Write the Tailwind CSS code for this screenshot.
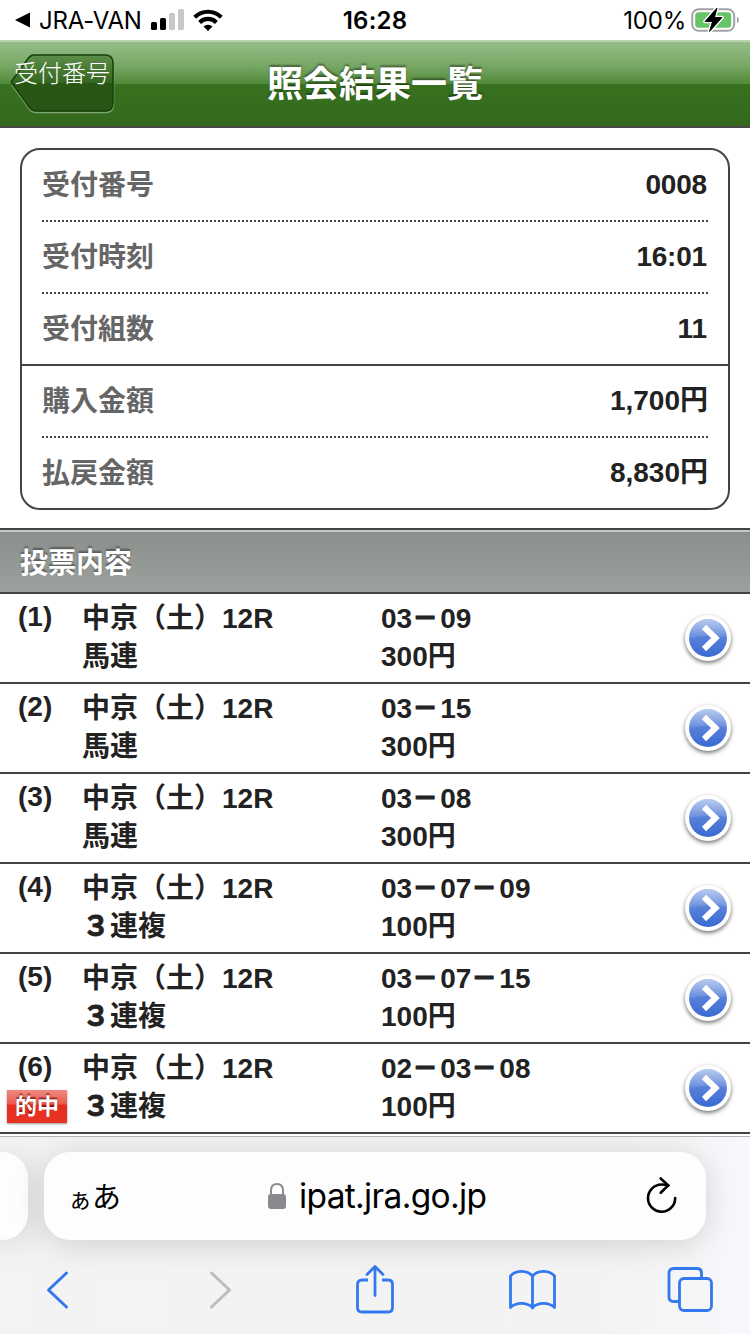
<!DOCTYPE html>
<html lang="ja">
<head>
    <meta charset="UTF-8">
    <meta name="viewport" content="width=device-width, initial-scale=1.0">
    <title>照会結果一覧</title>
    <script src="https://cdn.jsdelivr.net/npm/@tailwindcss/browser@4"></script>
</head>
<body class="bg-white w-[750px] h-[1334px] overflow-hidden flex flex-col text-[#222] font-['Liberation_Sans','Noto_Sans_CJK_JP',sans-serif]">

    <!-- status bar -->
    <div class="h-10 shrink-0 grid grid-cols-3 items-center text-black text-[24px] leading-10 font-['Inter',sans-serif]">
        <div class="flex items-center pl-[15px]">
            <svg class="w-[15px] h-4" viewBox="0 0 15 16"><path d="M0 8 15 .5v15z"/></svg>
            <span class="ml-[9px] w-[103px] pt-0.5 leading-[38px] whitespace-nowrap tracking-[-0.25px]">JRA-VAN</span>
            <svg class="ml-[9px] w-[33px] h-[22px]" viewBox="0 0 33 22">
                <rect x="0" y="13" width="6" height="8" rx="1.5"/>
                <rect x="9" y="9" width="6" height="12" rx="1.5"/>
                <rect x="18" y="4" width="6" height="17" rx="1.5" fill="#c8c8c8"/>
                <rect x="27" y="0" width="6" height="21" rx="1.5" fill="#c8c8c8"/>
            </svg>
            <svg class="ml-[9px] w-[30px] h-[22px]" viewBox="0 0 30 22">
                <g fill="none" stroke="#000" stroke-width="4.2">
                    <path d="M1.7 8.2a19 19 0 0 1 26.6 0"/>
                    <path d="M6.600 13.400a12 12 0 0 1 16.800 0"/>
                </g>
                <path d="M15 22l-4.500-4.500a6.500 6.500 0 0 1 9 0z"/>
            </svg>
        </div>
        <div class="pt-0.5 leading-[38px] text-center font-semibold tracking-[0.2px]">16:28</div>
        <div class="flex items-center justify-end pr-[11px]">
            <span class="pt-0.5 leading-[38px] tracking-[-0.2px]">100%</span>
            <svg class="ml-[5px] w-[48px] h-[26px]" viewBox="0 0 48 26">
                <rect x="1.200" y="2.200" width="42" height="21.600" rx="6.500" fill="none" stroke="#a3a3a5" stroke-width="2"/>
                <rect x="4.200" y="5.200" width="36" height="15.600" rx="3.500" fill="#65c466"/>
                <path d="M46 9.500q2 1 2 3.500t-2 3.500z" fill="#a3a3a5"/>
                <path d="M26 1 14 14.500h7.500L18.500 24.500l12.500-14h-7.500z" fill="#000" stroke="#fff" stroke-width="3.600" stroke-linejoin="round" paint-order="stroke"/>
                <path d="M26 1 14 14.500h7.500L18.500 24.500l12.500-14h-7.500z" stroke="#000" stroke-width=".8" stroke-linejoin="round"/>
            </svg>
        </div>
    </div>

    <!-- title bar -->
    <header class="relative h-[88px] shrink-0 border-t-2 border-t-[#b9d5ab] border-b-2 border-b-[#48484a] bg-[linear-gradient(#98bd89,#75a661_25px,#51883a_42px,#37721f_42px,#33681e)] flex justify-center">
        <h1 class="pt-1 text-white font-bold text-[36px] leading-[78px] [text-shadow:0_-2px_2px_rgba(0,0,0,.4)]">照会結果一覧</h1>
        <a class="absolute left-[10px] top-[11px] w-[106px] h-[62px]">
            <svg class="w-full h-full" viewBox="0 0 106 62">
                <defs>
                    <linearGradient id="back" x1="0" y1="0" x2="0" y2="1">
                        <stop offset="0" stop-color="#5d8e4a"/>
                        <stop offset=".5" stop-color="#34661f"/>
                        <stop offset=".5" stop-color="#285713"/>
                        <stop offset="1" stop-color="#285514"/>
                    </linearGradient>
                </defs>
                <path d="M24 3.500h71.500q8 0 8 8v40q0 8-8 8H26q-4 0-7-4L3 33.500q-2-2 0-4L17 8.500q3-5 7-5z" fill="none" stroke="#7fa66f" stroke-width="1.500"/>
                <path d="M24 2h71q8 0 8 8v40q0 8-8 8H26q-4 0-7-4L2.500 31q-2-2 0-4L17 7q3-5 7-5z" fill="url(#back)" stroke="#19420a" stroke-width="1.600"/>
            </svg>
            <span class="absolute left-1 top-0.5 text-white font-light text-[24px] leading-[38px] whitespace-nowrap">受付番号</span>
        </a>
    </header>

    <!-- summary -->
    <section class="mx-5 mt-5 h-[362px] shrink-0 border-2 border-[#444446] rounded-[20px] text-[28px] leading-[70px] font-bold">
        <div class="mx-5 h-[70px] flex justify-between"><span class="pt-px text-[#666]">受付番号</span><span class="pr-px tracking-[-0.2px]">0008</span></div>
        <div class="mx-5 h-0.5 bg-[repeating-linear-gradient(90deg,#444446_0_2px,#fff_2px_4px)]"></div>
        <div class="mx-5 h-[70px] flex justify-between"><span class="pt-px text-[#666]">受付時刻</span><span class="pr-px tracking-[-0.2px]">16:01</span></div>
        <div class="mx-5 h-0.5 bg-[repeating-linear-gradient(90deg,#444446_0_2px,#fff_2px_4px)]"></div>
        <div class="mx-5 h-[70px] flex justify-between"><span class="pt-px text-[#666]">受付組数</span><span class="pr-px">11</span></div>
        <div class="h-0.5 bg-[#444446]"></div>
        <div class="mx-5 h-[70px] flex justify-between"><span class="pt-px text-[#666]">購入金額</span><span>1,700円</span></div>
        <div class="mx-5 h-0.5 bg-[repeating-linear-gradient(90deg,#444446_0_2px,#fff_2px_4px)]"></div>
        <div class="mx-5 h-[70px] flex justify-between"><span class="pt-px text-[#666]">払戻金額</span><span>8,830円</span></div>
    </section>

    <!-- bets -->
    <h2 class="mt-[18px] h-[66px] shrink-0 border-y-2 border-[#444446] bg-[linear-gradient(#c4c8c6_2px,#8a8f8c_2px,#9ca19e)] pl-5 pt-[3px] text-white text-[28px] leading-[62px] font-bold [text-shadow:0_-2px_2px_rgba(0,0,0,.4)]">投票内容</h2>
    <ul id="bets" class="shrink-0 text-[28px] leading-[38px] font-bold"></ul>

    <!-- browser toolbar -->
    <footer class="mt-0.5 h-[198px] shrink-0 border-t border-[#b4b4b6] bg-linear-to-r from-[#f3f3f4] from-80% to-[#f7f8fb] overflow-hidden">
        <div class="flex mt-[15px]">
            <div class="w-7 h-[88px] bg-[#fdfdfd] rounded-r-[26px] shadow-[0_4px_32px_rgba(0,0,0,.15)]"></div>
            <div class="ml-4 w-[662px] h-[88px] bg-[#fdfdfe] rounded-[26px] shadow-[0_4px_32px_rgba(0,0,0,.15)] flex items-center text-black">
                <div class="ml-[24px] w-[53px] h-[88px] flex items-baseline font-['Noto_Sans_CJK_JP',sans-serif] whitespace-nowrap leading-[86px]">
                    <span class="text-[24px]">ぁ</span><span class="text-[29px]">あ</span>
                </div>
                <svg class="ml-[146px] w-5 h-7" viewBox="0 0 20 28">
                    <path d="M4 13V8.500C4 4.500 6.300 2 10 2s6 2.500 6 6.500V13" fill="none" stroke="#8a8a8e" stroke-width="2"/>
                    <rect x="1" y="12" width="18" height="15" rx="3" fill="#8a8a8e"/>
                </svg>
                <span class="ml-[12px] w-[190px] whitespace-nowrap text-[33.500px] font-['Inter',sans-serif] tracking-[-0.65px]">ipat.jra.go.jp</span>
                <svg class="ml-[156px] mb-0.5 w-8 h-[38px]" viewBox="0 0 32 38" fill="none" stroke="#000" stroke-width="2.600" stroke-linecap="round" stroke-linejoin="round">
                    <path d="M30.200 22A13.600 13.600 0 1 1 16.500 8.500q4 0 7 .9"/>
                    <path d="M15.700 2.500l7.500 6.900-7.500 7.400"/>
                </svg>
            </div>
        </div>
        <div class="flex mt-6 pl-[46px] h-[52px] items-center">
            <svg class="w-6 h-10" viewBox="0 0 24 40" fill="none" stroke="#3478f0" stroke-width="3" stroke-linecap="round" stroke-linejoin="round"><path d="M20.500 3 2.500 20l18 17"/></svg>
            <svg class="ml-[138px] w-6 h-10" viewBox="0 0 24 40" fill="none" stroke="#bcbcbe" stroke-width="3" stroke-linecap="round" stroke-linejoin="round"><path d="M3.500 3l18 17-18 17"/></svg>
            <svg class="ml-[123px] w-10 h-[50px]" viewBox="0 0 40 50" fill="none" stroke="#3478f0" stroke-width="2.800" stroke-linecap="round" stroke-linejoin="round">
                <path d="M13 15H7q-4.500 0-4.500 4.500v23q0 4.500 4.500 4.500h26q4.500 0 4.500-4.500v-23q0-4.500-4.500-4.500h-6" stroke-linecap="butt"/>
                <path d="M20 30.500V2M12 9.500l8-8 8 8"/>
            </svg>
            <svg class="ml-[113px] w-[50px] h-[42px]" viewBox="0 0 50 42" fill="none" stroke="#3478f0" stroke-width="2.800" stroke-linecap="round" stroke-linejoin="round">
                <path d="M24.500 7C19 .8 8 .8 2.500 7v31.500c5.500-5.500 16.500-5.500 22 0 5.500-5.500 16.500-5.500 22 0V7C41 .8 30 .8 24.500 7z"/>
                <path d="M24.500 7v32"/>
            </svg>
            <svg class="ml-[108px] w-12 h-12" viewBox="0 0 48 48" fill="none" stroke="#3478f0" stroke-width="2.800" stroke-linejoin="round">
                <path d="M12.500 35.500H7.500q-4.500 0-4.500-4.500V7q0-4.500 4.500-4.500H31q4.500 0 4.500 4.500v5"/>
                <rect x="13.500" y="12.500" width="32" height="32" rx="4.500"/>
            </svg>
        </div>
    </footer>

    <svg class="absolute w-0 h-0">
        <defs>
            <linearGradient id="blue" x1="0" y1="0" x2="0" y2="1">
                <stop offset="0" stop-color="#7397e0"/>
                <stop offset="1" stop-color="#3a69d2"/>
            </linearGradient>
            <linearGradient id="gloss" x1="0" y1="0" x2="0" y2="1">
                <stop offset="0" stop-color="#fff" stop-opacity=".5"/>
                <stop offset="1" stop-color="#fff" stop-opacity=".05"/>
            </linearGradient>
        </defs>
    </svg>

    <script>
        const bets = [
            { type: "馬連", nums: "03－09", yen: "300円" },
            { type: "馬連", nums: "03－15", yen: "300円" },
            { type: "馬連", nums: "03－08", yen: "300円" },
            { type: "３連複", nums: "03－07－09", yen: "100円" },
            { type: "３連複", nums: "03－07－15", yen: "100円" },
            { type: "３連複", nums: "02－03－08", yen: "100円", hit: true }
        ];

        const hitBadge = `<span class="ml-[7px] mt-1 w-[60px] h-[33px] bg-[linear-gradient(#f08a80,#ea5a4e_14px,#e62e20_15px,#e83323)] shadow-[0_1px_2px_rgba(0,0,0,.4)] text-white text-[22px] leading-[33px] text-center [text-shadow:0_-2px_1px_rgba(90,0,0,.6)]">的中</span>`;
        const dash = `<span class="inline-block -translate-x-px scale-x-90 [-webkit-text-stroke:1.2px_#222]">－</span>`;

        document.getElementById("bets").innerHTML = bets.map((bet, i) => `
            <li class="h-[90px] border-b-2 border-[#444446] flex">
                <div class="w-[82px] pt-1 flex flex-col">
                    <span class="pl-[18px]">(${i + 1})</span>
                    ${bet.hit ? hitBadge : ""}
                </div>
                <div class="w-[299px] pt-1.5">中京（土）12R<br>${bet.type.replace("３", `<span class="[-webkit-text-stroke:0.8px_#222]">３</span>`)}</div>
                <div class="w-[301px] pt-1.5">${bet.nums.replaceAll("－", dash)}<br>${bet.yen}</div>
                <svg class="mt-[18px] w-[52px] h-[54px] drop-shadow-[0_2px_2px_rgba(0,0,0,.55)]" viewBox="0 0 52 54">
                    <circle cx="26" cy="26" r="23" fill="#fff"/>
                    <circle cx="26" cy="26" r="19" fill="url(#blue)"/>
                    <path d="M7 27a19 19 0 0 1 38-2Q24 21 7 27z" fill="url(#gloss)"/>
                    <path d="M22 15 33.500 26 22 37" fill="none" stroke="#fff" stroke-width="6"/>
                </svg>
            </li>`).join("");
    </script>
</body>
</html>
